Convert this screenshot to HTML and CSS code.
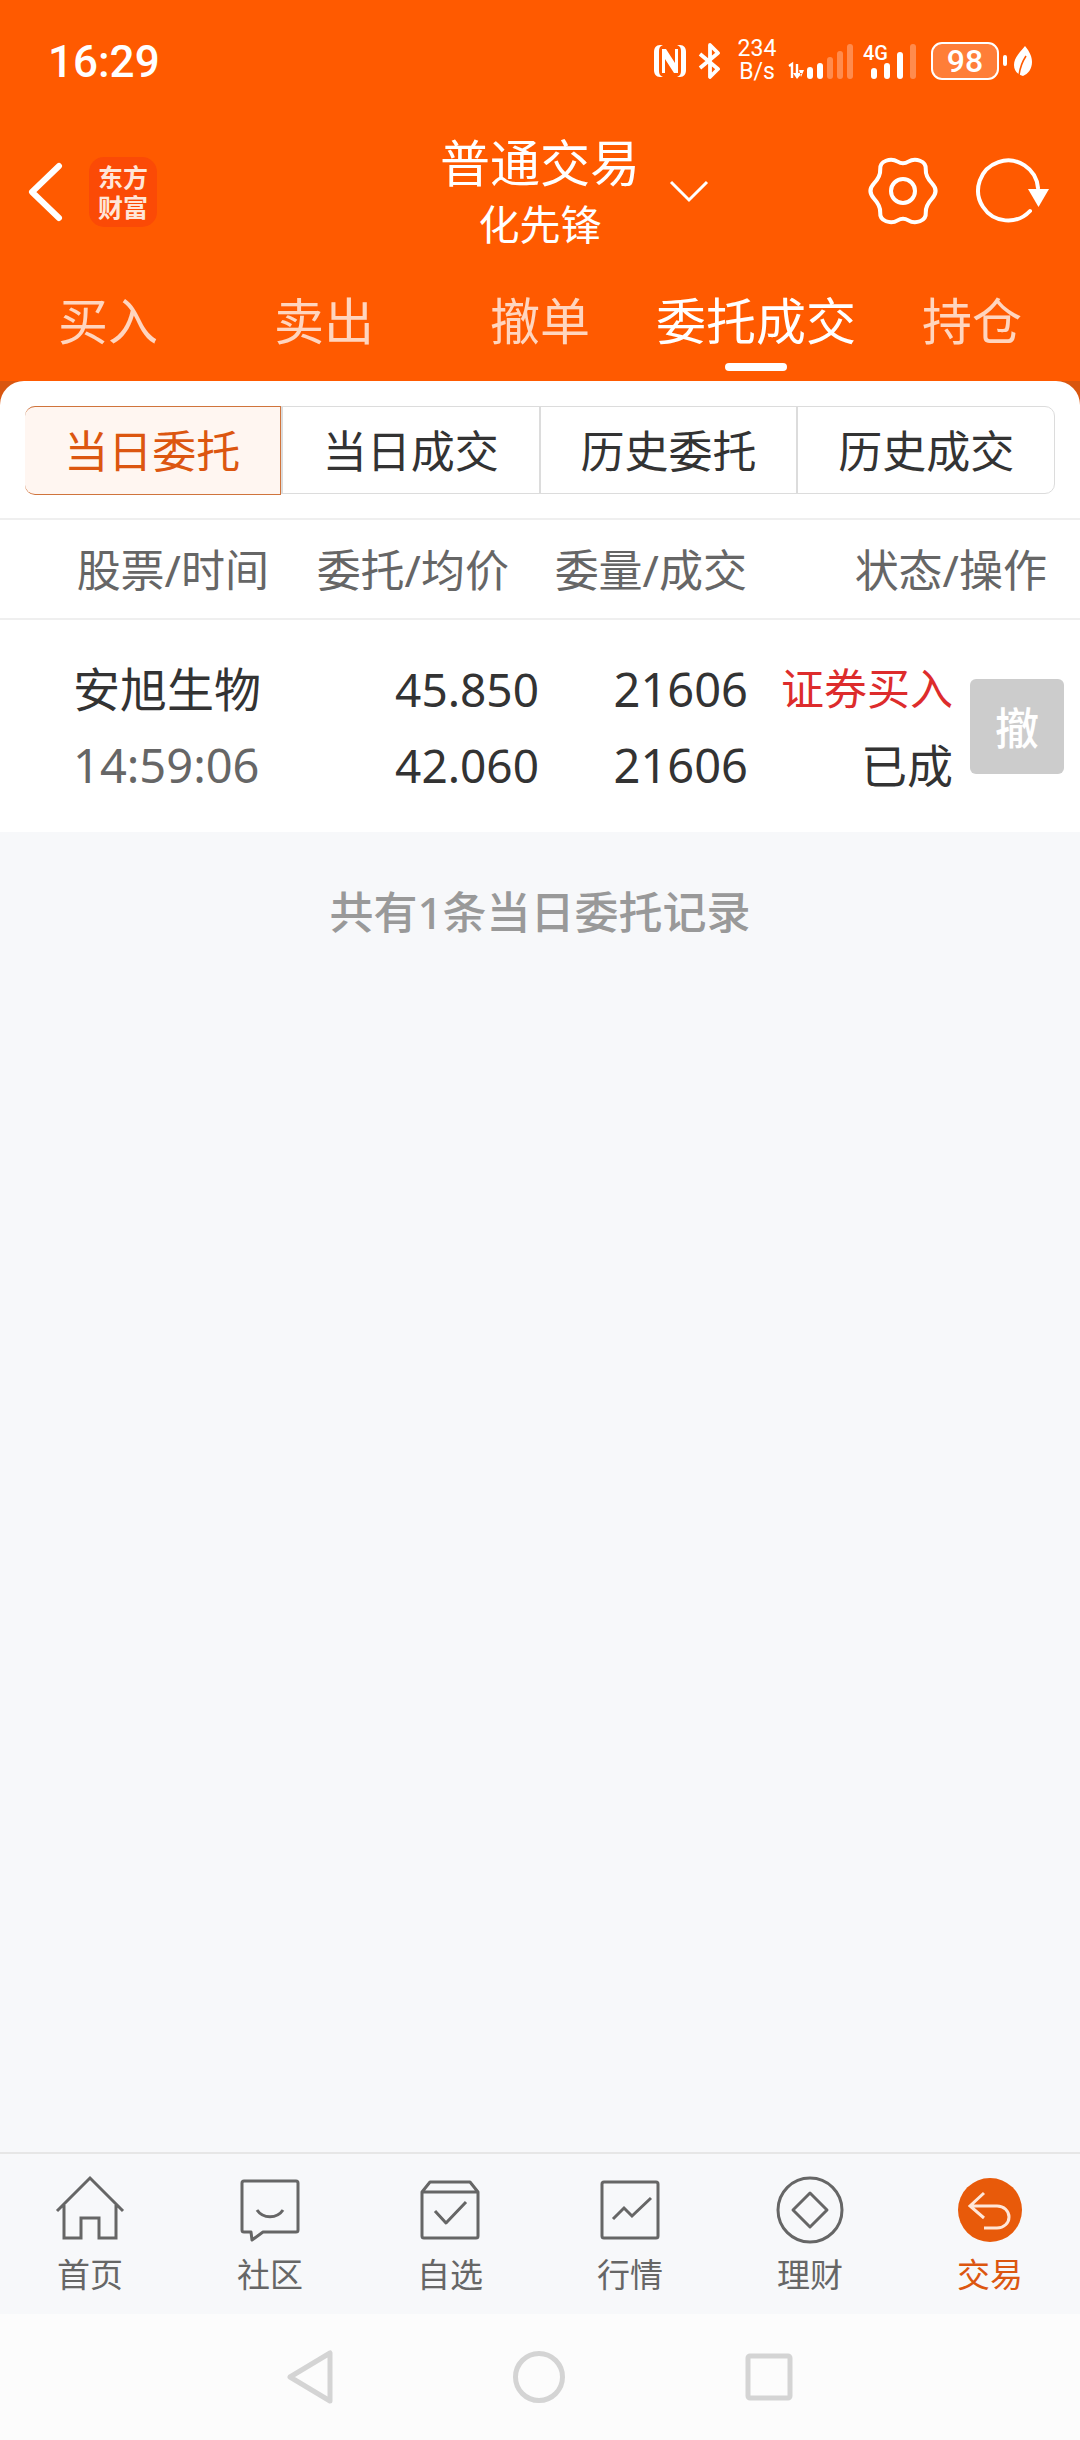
FILE: index.html
```html
<!DOCTYPE html>
<html lang="zh-CN">
<head>
  <meta charset="UTF-8" />
  <meta name="viewport" content="width=device-width, initial-scale=1.0" />
  <title>普通交易</title>
  <link rel="stylesheet" href="styles.css">
</head>
<body>
  <div class="page">
    <header class="top">
      <div class="status">
        <span class="clock">16:29</span>
        <div class="status-icons">
          <svg class="ic-nfc" width="34" height="34" viewBox="0 0 34 34">
            <path fill="#fff" d="M10 1H7C3 1 1 4 1 8v18c0 4 2 7 6 7h3c-3-1-4-3-4-6V7c0-3 1-5 4-6zM24 1h3c4 0 6 3 6 7v18c0 4-2 7-6 7h-3c3-1 4-3 4-6V7c0-3-1-5-4-6z"/>
            <path fill="#fff" d="M9 5h4l9 14V5h3v24h-4L12 15v14H9z"/>
          </svg>
          <svg class="ic-bt" width="24" height="36" viewBox="0 0 24 36">
            <path fill="none" stroke="#fff" stroke-width="3.8" stroke-linejoin="round" d="M2 11l18 15-8 8V2l8 8L2 25"/>
          </svg>
          <div class="speed"><span>234</span><span>B/s</span></div>
          <svg class="ic-sig1" width="74" height="38" viewBox="0 0 74 38">
            <path fill="none" stroke="#fff" stroke-width="2.4" d="M3 24l3-2v14M11 22v12"/>
            <path fill="#fff" d="M11 37l5-6h-9zM13 28h5l-3 7z"/>
            <rect x="21" y="25" width="6" height="12" rx="3" fill="#fff"/>
            <rect x="31" y="21" width="6" height="16" rx="3" fill="#fff"/>
            <rect x="41" y="15" width="6" height="22" rx="3" fill="#fff" opacity=".3"/>
            <rect x="51" y="9" width="6" height="28" rx="3" fill="#fff" opacity=".3"/>
            <rect x="61" y="2" width="6" height="35" rx="3" fill="#fff" opacity=".3"/>
          </svg>
          <svg class="ic-sig2" width="54" height="38" viewBox="0 0 54 38">
            <text x="0" y="18" class="net">4G</text>
            <rect x="8" y="26" width="6" height="11" rx="3" fill="#fff"/>
            <rect x="21" y="21" width="6" height="16" rx="3" fill="#fff"/>
            <rect x="34" y="10" width="6" height="27" rx="3" fill="#fff"/>
            <rect x="47" y="2" width="6" height="35" rx="3" fill="#fff" opacity=".3"/>
          </svg>
          <div class="battery"><span>98</span></div>
          <i class="battery-tip"></i>
          <svg class="ic-leaf" width="18" height="30" viewBox="0 0 18 30">
            <path fill="#fff" d="M11 0c5 6 7 11 7 16 0 7-4 12-9 14-5-1-9-5-9-11C0 12 6 6 11 0z"/>
            <path fill="none" stroke="#ff5a00" stroke-width="1.6" d="M5 29c1-7 3-13 7-19"/>
          </svg>
        </div>
      </div>

      <div class="titlebar">
        <div class="titlebar-left">
          <svg class="back" width="36" height="60" viewBox="0 0 36 60">
            <path fill="none" stroke="#fff" stroke-width="6" stroke-linecap="round" stroke-linejoin="round" d="M32 4L5 30l27 26"/>
          </svg>
          <div class="logo"><span>东方</span><span>财富</span></div>
        </div>
        <div class="title">
          <div class="title-main">普通交易</div>
          <div class="title-sub">化先锋</div>
        </div>
        <div class="titlebar-right">
          <svg class="caret" width="40" height="24" viewBox="0 0 40 24">
            <path fill="none" stroke="#fff" stroke-width="3" d="M2 3l18 18L38 3"/>
          </svg>
          <div class="actions">
            <svg width="80" height="80" viewBox="-40 -40 80 80">
              <path transform="scale(.97 .93)" fill="none" stroke="#fff" stroke-width="4.2" d="M-5.5-31.5Q0-28 5.5-31.5Q11-35 17.5-32.5Q24-30 23.5-23Q23-16 30-8Q37 0 30 8Q23 16 23.5 23Q24 30 17.5 32.5Q11 35 5.5 31.5Q0 28-5.5 31.5Q-11 35-17.5 32.5Q-24 30-23.5 23Q-23 16-30 8Q-37 0-30-8Q-23-16-23.5-23Q-24-30-17.5-32.5Q-11-35-5.5-31.5Z"/>
              <circle r="12" fill="none" stroke="#fff" stroke-width="4"/>
            </svg>
            <svg width="76" height="72" viewBox="0 0 76 72">
              <path fill="none" stroke="#fff" stroke-width="4" stroke-linecap="round" d="M56 56A30 30 0 1 1 64 33"/>
              <path fill="#fff" d="M54 34h21l-10.500 18z"/>
            </svg>
          </div>
        </div>
      </div>

      <nav class="tabs">
        <a class="tab">买入</a>
        <a class="tab">卖出</a>
        <a class="tab">撤单</a>
        <a class="tab tab-on">委托成交</a>
        <a class="tab">持仓</a>
      </nav>
    </header>

    <main class="body">
      <div class="sheet">
        <div class="seg-wrap">
          <div class="seg">
            <div class="seg-item seg-on">当日委托</div>
            <div class="seg-item">当日成交</div>
            <div class="seg-item">历史委托</div>
            <div class="seg-item">历史成交</div>
          </div>
        </div>
        <div class="thead">
          <span>股票/时间</span>
          <span>委托/均价</span>
          <span>委量/成交</span>
          <span>状态/操作</span>
        </div>
        <div class="order">
          <div class="col col-name">
            <span>安旭生物</span>
            <span class="muted">14:59:06</span>
          </div>
          <div class="col col-price">
            <span>45.850</span>
            <span>42.060</span>
          </div>
          <div class="col col-qty">
            <span>21606</span>
            <span>21606</span>
          </div>
          <div class="col col-state">
            <span class="buy">证券买入</span>
            <span class="done">已成</span>
          </div>
          <button class="cancel">撤</button>
        </div>
      </div>
      <p class="count">共有1条当日委托记录</p>
    </main>

    <nav class="bottom">
      <a class="bottom-item">
        <svg width="72" height="72" viewBox="0 0 72 72" fill="none" stroke="#666" stroke-width="3">
          <path d="M3 37L36 4l33 33M10 31v33h17V44h18v20h17V31"/>
        </svg>
        首页
      </a>
      <a class="bottom-item">
        <svg width="72" height="72" viewBox="0 0 72 72" fill="none" stroke="#666" stroke-width="3" stroke-linejoin="round">
          <path d="M10 7h52a2 2 0 0 1 2 2v47a2 2 0 0 1-2 2H29l-11 8-1-8h-7a2 2 0 0 1-2-2V9a2 2 0 0 1 2-2z"/>
          <path d="M23 36c6 9 20 9 26 0"/>
        </svg>
        社区
      </a>
      <a class="bottom-item">
        <svg width="72" height="72" viewBox="0 0 72 72" fill="none" stroke="#666" stroke-width="3" stroke-linejoin="round">
          <path d="M8 18l8-10h40l8 10v44a2 2 0 0 1-2 2H10a2 2 0 0 1-2-2zM8 18h56"/>
          <path d="M21 37l11 12 20-21"/>
        </svg>
        自选
      </a>
      <a class="bottom-item">
        <svg width="72" height="72" viewBox="0 0 72 72" fill="none" stroke="#666" stroke-width="3">
          <rect x="8" y="8" width="56" height="56" rx="2"/>
          <path d="M19 45l11-11 8 8 19-18"/>
        </svg>
        行情
      </a>
      <a class="bottom-item">
        <svg width="72" height="72" viewBox="0 0 72 72" fill="none" stroke="#666" stroke-width="3" stroke-linejoin="round">
          <circle cx="36" cy="36" r="32"/>
          <path d="M36 19l17 17-17 17-17-17z"/>
        </svg>
        理财
      </a>
      <a class="bottom-item bottom-on">
        <svg width="72" height="72" viewBox="0 0 72 72" fill="none">
          <circle cx="36" cy="36" r="32" fill="#e85a0a"/>
          <path stroke="#ffe6d8" stroke-width="3" d="M30 19L16 32l14 12M16 32h27c7 0 12 5 12 11s-5 11-12 11H30"/>
        </svg>
        交易
      </a>
    </nav>

    <div class="sysnav">
      <svg width="46" height="54" viewBox="0 0 46 54" fill="none" stroke="#d4d4d4" stroke-width="5" stroke-linejoin="round">
        <path d="M43 3v48L3 27z"/>
      </svg>
      <svg width="52" height="52" viewBox="0 0 52 52" fill="none" stroke="#d4d4d4" stroke-width="5">
        <circle cx="26" cy="26" r="23.5"/>
      </svg>
      <svg width="48" height="48" viewBox="0 0 48 48" fill="none" stroke="#d4d4d4" stroke-width="5" stroke-linejoin="round">
        <rect x="3" y="3" width="42" height="42" rx="2"/>
      </svg>
    </div>
  </div>
</body>
</html>
```

FILE: styles.css
```css
:root {
  --orange: #ff5a00;
  --accent: #dc5610;
  --text: #333;
  --grey: #666;
  --line: #efefef;
  --page-bg: #f7f8fa;
}
* { box-sizing: border-box; margin: 0; padding: 0; }
body {
  font-family: "Noto Sans", "Noto Sans CJK SC", sans-serif;
  color: var(--text);
  background: var(--page-bg);
}
.page { width: 1080px; height: 2440px; display: flex; flex-direction: column; overflow: hidden; }

/* orange header */
.top { height: 381px; background: var(--orange); color: #fff; flex: none; }
.status { height: 127px; display: flex; justify-content: space-between; align-items: flex-start; padding: 37px 48px 0; }
.clock { font: 500 44px/50px Roboto, sans-serif; }
.status-icons { display: flex; align-items: flex-start; position: relative; top: 5px; }
.ic-nfc { margin-top: 2px; }
.ic-bt { margin: 1px 0 0 11px; }
.speed { display: flex; flex-direction: column; margin: -5px 0 0 15px; font: 400 23px/23px Roboto, sans-serif; text-align: center; width: 40px; }
.ic-sig1 { margin-left: 9px; }
.ic-sig2 { margin-left: 3px; }
.net { font: 500 20px Roboto, sans-serif; fill: #fff; }
.battery { width: 68px; height: 38px; margin-left: 14px; border: 2.5px solid #fff; border-radius: 11px; background: rgba(255,255,255,.22); display: flex; align-items: center; justify-content: center; }
.battery span { font: 500 32px/32px Roboto, sans-serif; }
.battery-tip { width: 4px; height: 11px; margin: 13px 0 0 4px; background: #fff; border-radius: 2px; }
.ic-leaf { margin: 4px 0 0 7px; }

.titlebar { height: 124px; display: grid; grid-template-columns: 1fr auto 1fr; align-items: center; }
.titlebar-left { display: flex; align-items: center; padding: 6px 0 0 27px; }
.logo { width: 68px; height: 70px; margin-left: 26px; background: #fb4a06; border-radius: 15px; display: flex; flex-direction: column; align-items: center; justify-content: center; font-size: 25px; line-height: 30px; font-weight: 700; color: #ffe6d8; }
.title { text-align: center; }
.title-main { font-size: 50px; line-height: 70px; }
.title-sub { font-size: 41px; line-height: 52px; }
.titlebar-right { display: flex; align-items: center; padding: 3px 30px 0 29px; }
.actions { display: flex; align-items: center; gap: 31px; margin-left: auto; }

.tabs { display: grid; grid-template-columns: repeat(5, 1fr); height: 130px; }
.tab { display: block; position: relative; text-align: center; font-size: 50px; line-height: 66px; padding-top: 37px; color: rgba(255,255,255,.75); }
.tab-on { color: #fff; }
.tab-on::after { content: ""; position: absolute; left: 77px; bottom: 10px; width: 62px; height: 8px; border-radius: 4px; background: #fff; }

/* white sheet with small dark corners behind its rounded top */
.body { flex: 1; background: var(--page-bg); }
.sheet { background: linear-gradient(#d9560f 24px, #fff 24px); }
.seg-wrap { background: #fff; padding: 25px 25px 24px; border-radius: 24px 24px 0 0; }
.seg { display: grid; grid-template-columns: 255px repeat(3, 1fr); height: 88px; border: 1.5px solid #dcdcdc; border-radius: 10px; }
.seg-item { display: flex; align-items: center; justify-content: center; font-size: 44px; padding-bottom: 2px; border-left: 2px solid #dcdcdc; }
.seg-item:first-child { border-left: 0; }
.seg-on { margin: -1.5px 0 -1.5px -1.5px; color: var(--accent); background: #fff6f1; border: 1.5px solid #d0743c; border-radius: 10px 0 0 10px; }

.thead { display: grid; grid-template-columns: 269px 240px 238px 300px; height: 102px; align-items: center; text-align: right; font-size: 44px; color: var(--grey); padding-bottom: 2px; border-top: 2px solid var(--line); border-bottom: 2px solid var(--line); }

.order { display: flex; align-items: center; height: 212px; padding-top: 1px; font-size: 47px; }
.col { display: flex; flex-direction: column; line-height: 76px; text-align: right; }
.col-name { width: 265px; padding-left: 73px; text-align: left; }
.col-price { width: 274px; font-size: 46px; }
.col-qty { width: 209px; }
.col-state { width: 205px; }
.muted { color: var(--grey); }
.buy { color: #dd2c2c; font-size: 43px; }
.done { font-size: 46px; }
.cancel { width: 94px; height: 95px; margin: -1px 0 0 17px; border: 0; border-radius: 6px; background: #ccc; color: #fff; font: 500 44px "Noto Sans CJK SC", sans-serif; }

.count { text-align: center; font-size: 44px; font-weight: 500; color: #999; line-height: 60px; padding-top: 50px; }

/* bottom tab bar */
.bottom { display: grid; grid-template-columns: repeat(6, 1fr); height: 162px; flex: none; background: #f7f8fa; border-top: 2px solid #e6e6e6; }
.bottom-item { display: flex; flex-direction: column; align-items: center; padding-top: 20px; font-size: 33px; line-height: 46px; color: var(--grey); }
.bottom-item svg { margin-bottom: 6px; }
.bottom-on { color: var(--accent); }

.sysnav { height: 126px; flex: none; background: #fcfcfc; display: grid; grid-template-columns: 46px 52px 48px; justify-content: center; column-gap: 180px; align-items: center; }
```
